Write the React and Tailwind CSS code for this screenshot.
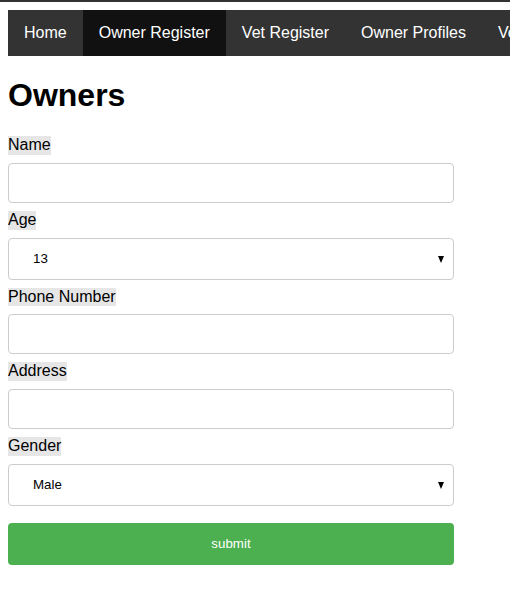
import { useState } from "react";

const links = ["Home", "Owner Register", "Vet Register", "Owner Profiles", "Vet Profiles"];

export default function App() {
  const [form, setForm] = useState({ name: "", age: "13", phone: "", address: "", gender: "Male" });
  const handleChange = e => setForm({ ...form, [e.target.name]: e.target.value });

  const inputClass = "block w-[446px] h-[40px] my-2 px-5 border border-[#ccc] rounded bg-white text-[13.33px] focus:outline-none";
  const selectClass = "block w-[446px] h-[42px] pl-6 pr-2 border border-[#ccc] rounded bg-white text-[13.33px] text-black appearance-none";
  const labelClass = "block w-fit h-[18.75px] bg-[#e6e6e6] text-[16px] leading-[18px] text-black";

  return (
    <div className="min-h-screen bg-white font-['Liberation_Sans',Arial,sans-serif]">
      <div className="h-[2px] bg-[#333]" />
      <nav className="ml-2 mt-2 h-[46px] flex bg-[#333] overflow-hidden whitespace-nowrap">
        {links.map(l => (
          <a
            key={l}
            href="#"
            className={`px-4 py-[14px] text-[16px] leading-[18px] text-white shrink-0 ${l === "Owner Register" ? "bg-[#111]" : ""}`}
          >
            {l}
          </a>
        ))}
      </nav>
      <div className="px-2">
        <h1 className="text-[32px] leading-[37px] font-bold mt-[21px] mb-[22px] text-black">Owners</h1>
        <form onSubmit={e => e.preventDefault()}>
          <label className={labelClass}>Name</label>
          <input name="name" value={form.name} onChange={handleChange} className={inputClass} />
          <label className={labelClass}>Age</label>
          <div className="relative w-[446px] my-2">
            <select name="age" value={form.age} onChange={handleChange} className={selectClass}>
              {Array.from({ length: 90 }, (_, i) => i + 1).map(n => (
                <option key={n} value={String(n)}>{n}</option>
              ))}
            </select>
            <span className="pointer-events-none absolute right-[10px] top-[18px] w-0 h-0 border-l-[3.5px] border-r-[3.5px] border-t-[7px] border-l-transparent border-r-transparent border-t-black" />
          </div>
          <label className={labelClass}>Phone Number</label>
          <input name="phone" value={form.phone} onChange={handleChange} className={inputClass} />
          <label className={labelClass}>Address</label>
          <input name="address" value={form.address} onChange={handleChange} className={inputClass} />
          <label className={labelClass}>Gender</label>
          <div className="relative w-[446px] mt-2">
            <select name="gender" value={form.gender} onChange={handleChange} className={selectClass}>
              <option>Male</option>
              <option>Female</option>
            </select>
            <span className="pointer-events-none absolute right-[10px] top-[18px] w-0 h-0 border-l-[3.5px] border-r-[3.5px] border-t-[7px] border-l-transparent border-r-transparent border-t-black" />
          </div>
          <button
            type="submit"
            className="block w-[446px] h-[42px] mt-[17px] bg-[#4CAF50] text-white text-[13.33px] rounded"
          >
            submit
          </button>
        </form>
      </div>
    </div>
  );
}
